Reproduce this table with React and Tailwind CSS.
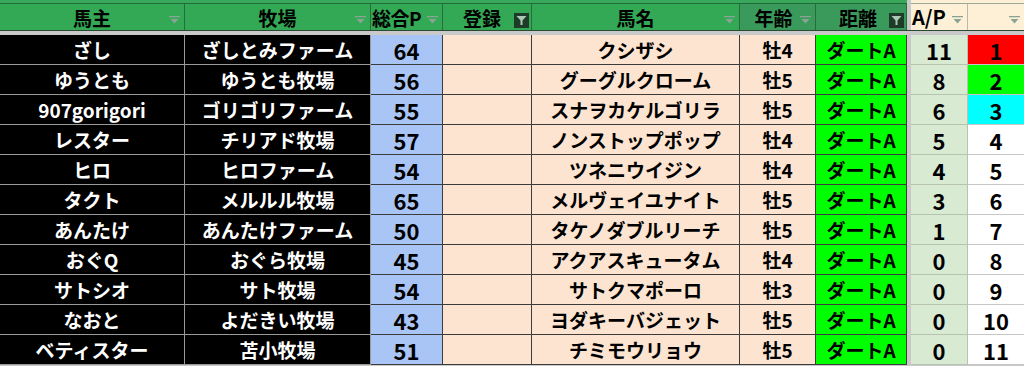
import React from "react";

const rows = [
  ["ざし", "ざしとみファーム", 64, "クシザシ", "牡4", 11, 1],
  ["ゆうとも", "ゆうとも牧場", 56, "グーグルクローム", "牡5", 8, 2],
  ["907gorigori", "ゴリゴリファーム", 55, "スナヲカケルゴリラ", "牡5", 6, 3],
  ["レスター", "チリアド牧場", 57, "ノンストップポップ", "牡4", 5, 4],
  ["ヒロ", "ヒロファーム", 54, "ツネニウイジン", "牡4", 4, 5],
  ["タクト", "メルルル牧場", 65, "メルヴェイユナイト", "牡5", 3, 6],
  ["あんたけ", "あんたけファーム", 50, "タケノダブルリーチ", "牡5", 1, 7],
  ["おぐQ", "おぐら牧場", 45, "アクアスキュータム", "牡4", 0, 8],
  ["サトシオ", "サト牧場", 54, "サトクマポーロ", "牡3", 0, 9],
  ["なおと", "よだきい牧場", 43, "ヨダキーバジェット", "牡5", 0, 10],
  ["ベティスター", "苫小牧場", 51, "チミモウリョウ", "牡5", 0, 11],
];

const rankBg = { 1: "bg-[#ff0000]", 2: "bg-[#00ff00]", 3: "bg-[#00ffff]" };

function Drop() {
  return (
    <svg width="11" height="8" viewBox="0 0 11 8" className="absolute right-[4px] bottom-[6px]">
      <rect x="0" y="0" width="11" height="1.3" fill="#8aa493" />
      <path d="M1.5 3 L9.5 3 L5.5 7.5 Z" fill="#8aa493" />
    </svg>
  );
}

function ActiveFilter() {
  return (
    <div className="absolute right-[2px] bottom-[2px] w-[15px] h-[15px] bg-[#1d3b28] flex items-center justify-center">
      <svg width="11" height="11" viewBox="0 0 11 11">
        <path d="M0.5 1 L10.5 1 L6.5 5.5 L6.5 10 L4.5 10 L4.5 5.5 Z" fill="#a9c9b3" />
      </svg>
    </div>
  );
}

function Head({ w, bg, children, icon = "drop", align = "center" }) {
  return (
    <div
      className={`${w} ${bg} relative h-full border-r border-[#2a6b3e] flex items-center ${
        align === "left" ? "justify-start pl-[1px]" : "justify-center"
      } text-[19px] font-bold text-black`}
    >
      {children}
      {icon === "drop" && <Drop />}
      {icon === "active" && <ActiveFilter />}
    </div>
  );
}

export default function App() {
  return (
    <div
      className="w-[1024px] h-[366px] overflow-hidden bg-[#c9c9c9] leading-none"
      style={{ fontFamily: '"Noto Sans CJK JP", "Noto Sans", sans-serif' }}
    >
      {/* top strip from the row above */}
      <div className="flex h-[4px]">
        <div className="w-[907px] bg-[#3aa85c] border-b border-[#1f6b37]" />
        <div className="w-[4px] bg-[#c9c9c9]" />
        <div className="w-[113px] bg-[#fdf0d6] border-b border-[#9aa890]" />
      </div>

      {/* header */}
      <div className="flex h-[27px] border-b border-[#2a4a33]">
        <Head w="w-[185px]" bg="bg-[#33a955]">馬主</Head>
        <Head w="w-[186px]" bg="bg-[#33a955]">牧場</Head>
        <Head w="w-[72px]" bg="bg-[#33a955]" align="left">
          <span className="tracking-[-0.5px]">総合P</span>
        </Head>
        <Head w="w-[89px]" bg="bg-[#33a955]" icon="active">
          <span className="mr-[10px]">登録</span>
        </Head>
        <Head w="w-[208px]" bg="bg-[#33a955]">馬名</Head>
        <Head w="w-[76px]" bg="bg-[#3a9a5b]">
          <span className="mr-[8px]">年齢</span>
        </Head>
        <Head w="w-[91px]" bg="bg-[#3a9a5b]" icon="active">
          <span className="mr-[6px]">距離</span>
        </Head>
        <div className="w-[4px] h-full bg-[#c9c9c9]" />
        <div className="w-[57px] h-full bg-[#fdf0d6] relative border-r border-[#b9b9a9] flex items-center pl-[1px] text-[20px] font-bold">
          A/P
          <Drop />
        </div>
        <div className="w-[56px] h-full bg-[#fdf0d6] relative">
          <Drop />
        </div>
      </div>

      {/* separator band */}
      <div className="h-[4px] bg-[#c9c9c9]" />

      {/* data rows */}
      {rows.map((r, i) => (
        <div key={i} className="flex h-[30px] text-[19px] font-bold">
          <div className="w-[185px] bg-black text-white border-r border-b border-[#9a9a9a] flex items-center justify-center">
            {r[0]}
          </div>
          <div className="w-[186px] bg-black text-white border-r border-b border-[#9a9a9a] flex items-center justify-center">
            {r[1]}
          </div>
          <div className="w-[72px] bg-[#a8c5f5] border-r border-b border-[#3c3c3c] flex items-center justify-center text-[22px]">
            {r[2]}
          </div>
          <div className="w-[89px] bg-[#fce4d0] border-r border-b border-[#3c3c3c]" />
          <div className="w-[208px] bg-[#fce4d0] border-r border-b border-[#3c3c3c] flex items-center justify-center">
            {r[3]}
          </div>
          <div className="w-[76px] bg-[#fce4d0] border-r border-b border-[#3c3c3c] flex items-center justify-center">
            {r[4]}
          </div>
          <div className="w-[91px] bg-[#00ff00] border-r border-b border-[#3c3c3c] flex items-center justify-center">
            ダートA
          </div>
          <div className="w-[4px] bg-[#c9c9c9]" />
          <div className="w-[57px] bg-[#d9ead3] border-r border-b border-[#b7c2b0] flex items-center justify-center text-[22px]">
            {r[5]}
          </div>
          <div
            className={`w-[56px] ${rankBg[r[6]] || "bg-white"} border-b border-[#c6c6c6] flex items-center justify-center text-[22px]`}
          >
            {r[6]}
          </div>
        </div>
      ))}
    </div>
  );
}
